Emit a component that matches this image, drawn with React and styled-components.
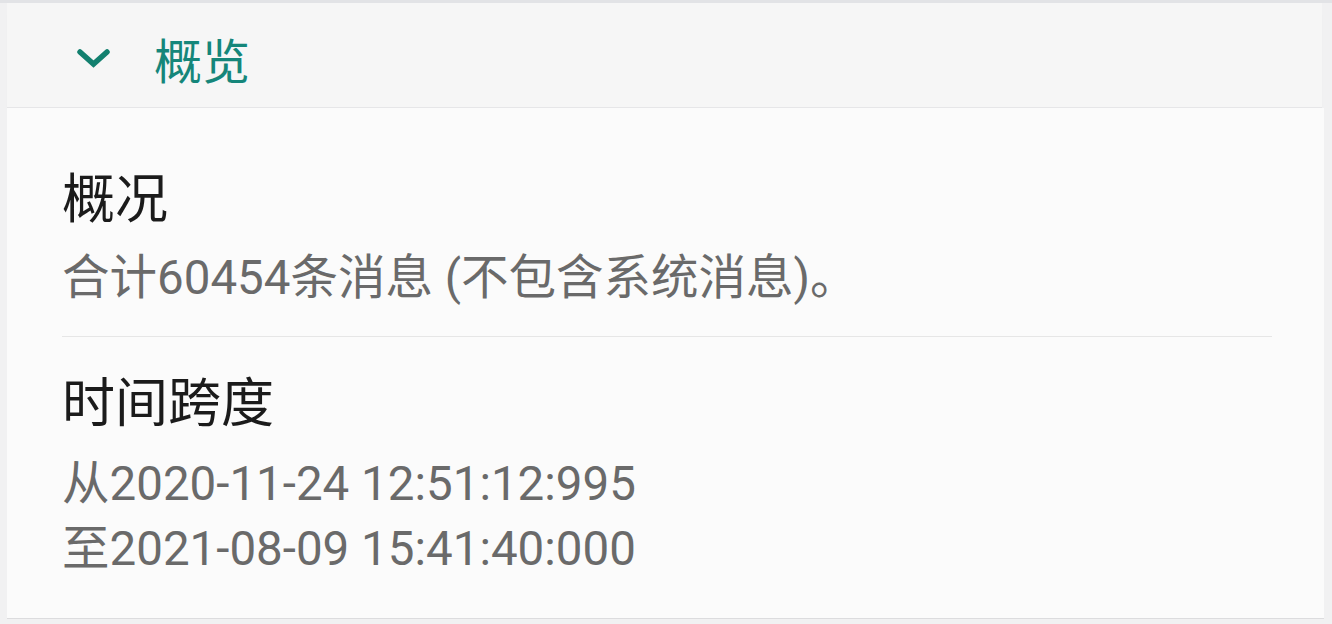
import React from 'react';
import styled, { createGlobalStyle } from 'styled-components';

const GlobalStyle = createGlobalStyle`
  html, body {
    margin: 0;
    padding: 0;
    background: #fbfbfb;
  }
  body {
    font-family: Roboto, "Noto Sans CJK SC", sans-serif;
  }
`;

const Screen = styled.div`
  width: 1332px;
  height: 624px;
  overflow: hidden;
  display: flex;
  flex-direction: column;
  border-top: 3px solid #e2e3e6;
  box-sizing: border-box;
  background: #f1f1f2;
`;

const Header = styled.div`
  height: 105px;
  flex-shrink: 0;
  margin: 0 10px 0 7px;
  display: flex;
  align-items: center;
  padding: 6px 0 0 70px;
  background: #f6f6f6;
  border-bottom: 1px solid #e6e6e8;
  box-shadow: 0 6px 8px -4px rgba(0, 0, 0, 0.04);
  box-sizing: border-box;
`;

const HeaderTitle = styled.span`
  margin-left: 44px;
  font-size: 48px;
  color: #15867a;
  font-family: "Noto Sans CJK SC", sans-serif;
  line-height: 1;
`;

const Card = styled.div`
  height: 511px;
  box-sizing: border-box;
  margin: 0 8px 0 7px;
  padding: 57px 0 0 55px;
  display: flex;
  flex-direction: column;
  background: #fbfbfb;
  border-bottom: 1px solid #dcdcde;
`;

const Section = styled.div`
  margin-right: 52px;
  border-bottom: ${(p) => (p.divided ? '1px solid #e6e6e6' : 'none')};
  padding-bottom: ${(p) => (p.divided ? '25px' : '0')};
  margin-bottom: ${(p) => (p.divided ? '32px' : '0')};
`;

const Title = styled.div`
  font-size: 53px;
  line-height: 60px;
  color: #1b1b1b;
  font-family: "Noto Sans CJK SC", sans-serif;
`;

const Line = styled.div`
  font-size: 47.5px;
  line-height: 65px;
  color: #6a6a6a;
  font-family: Roboto, "Noto Sans CJK SC", sans-serif;
`;

const Body = styled.div`
  margin-top: ${(p) => p.gap}px;
`;

function Chevron() {
  return (
    <svg width="33" height="22" viewBox="0 0 33 22">
      <polyline
        points="3,5 16.5,17 30,5"
        fill="none"
        stroke="#13806f"
        strokeWidth="5.5"
        strokeLinecap="round"
        strokeLinejoin="miter"
      />
    </svg>
  );
}

export default function App() {
  return (
    <>
      <GlobalStyle />
      <Screen>
        <Header>
          <Chevron />
          <HeaderTitle>概览</HeaderTitle>
        </Header>
        <Card>
          <Section divided>
            <Title>概况</Title>
            <Body gap={21}>
              <Line>合计60454条消息 (不包含系统消息)。</Line>
            </Body>
          </Section>
          <Section>
            <Title>时间跨度</Title>
            <Body gap={23}>
              <Line>从2020-11-24 12:51:12:995</Line>
              <Line>至2021-08-09 15:41:40:000</Line>
            </Body>
          </Section>
        </Card>
      </Screen>
    </>
  );
}
